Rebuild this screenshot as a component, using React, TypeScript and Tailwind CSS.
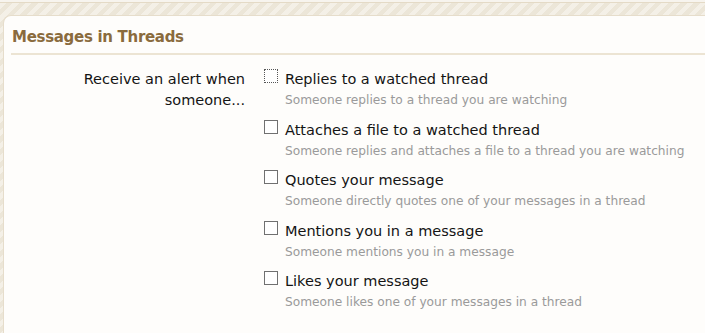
import React from "react";

const options = [
  { label: "Replies to a watched thread", hint: "Someone replies to a thread you are watching", focus: true },
  { label: "Attaches a file to a watched thread", hint: "Someone replies and attaches a file to a thread you are watching" },
  { label: "Quotes your message", hint: "Someone directly quotes one of your messages in a thread" },
  { label: "Mentions you in a message", hint: "Someone mentions you in a message" },
  { label: "Likes your message", hint: "Someone likes one of your messages in a thread" },
];

export default function App() {
  return (
    <div className="w-[705px] h-[333px] overflow-hidden bg-[#f7f4ee] font-['DejaVu_Sans',sans-serif] flex flex-col">
      <div className="h-[2px] shrink-0" />
      <div className="flex-1 flex flex-col border-t border-[#e4dac6] bg-[repeating-linear-gradient(135deg,#f4f0e7_0px,#f4f0e7_4.5px,#ece6d8_4.5px,#ece6d8_9px)] pt-[12px] pl-[3px]">
        <div className="flex-1 bg-[#fefdfb] border-t border-l border-[#e6ddcb] rounded-tl-[8px] pl-[7px] pt-[12px]">
          <h3 className="text-[15px] leading-[18px] font-bold text-[#8a6b3d] pb-[7px] border-b-2 border-[#ece4d3] pl-px tracking-[-0.3px]">
            Messages in Threads
          </h3>
          <div className="flex pt-[14px]">
            <div className="w-[234px] shrink-0 text-right text-[14.5px] leading-[21px] text-[#141414]">
              Receive an alert when
              <br />
              someone...
            </div>
            <div className="ml-[19px] flex flex-col gap-[9.5px]">
              {options.map((o) => (
                <div key={o.label} className="flex items-start">
                  <div
                    className={
                      o.focus
                        ? "w-[14px] h-[14px] bg-white border border-dotted border-[#555] shrink-0"
                        : "w-[14px] h-[14px] bg-white border border-[#707070] shrink-0"
                    }
                  />
                  <div className="ml-[7px] flex flex-col">
                    <span className="text-[14.5px] leading-[21px] text-[#141414]">{o.label}</span>
                    <span className="text-[12.2px] leading-[20px] text-[#9a9a9a]">{o.hint}</span>
                  </div>
                </div>
              ))}
            </div>
          </div>
        </div>
      </div>
    </div>
  );
}
